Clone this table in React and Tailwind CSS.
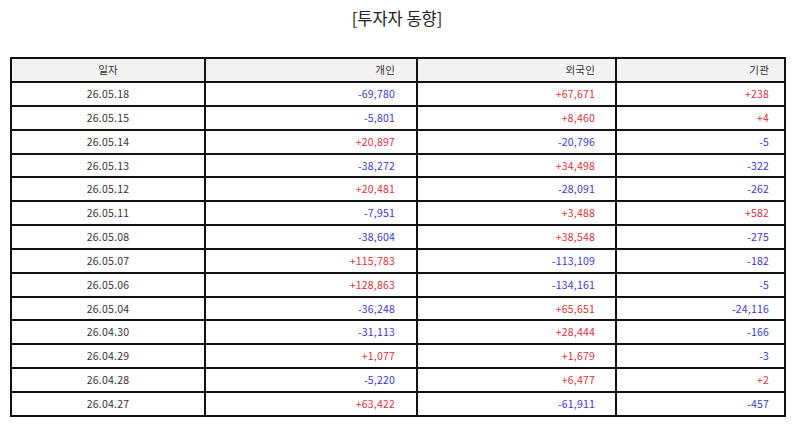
const rows = [
  ["26.05.18", "-69,780", "+67,671", "+238"],
  ["26.05.15", "-5,801", "+8,460", "+4"],
  ["26.05.14", "+20,897", "-20,796", "-5"],
  ["26.05.13", "-38,272", "+34,498", "-322"],
  ["26.05.12", "+20,481", "-28,091", "-262"],
  ["26.05.11", "-7,951", "+3,488", "+582"],
  ["26.05.08", "-38,604", "+38,548", "-275"],
  ["26.05.07", "+115,783", "-113,109", "-182"],
  ["26.05.06", "+128,863", "-134,161", "-5"],
  ["26.05.04", "-36,248", "+65,651", "-24,116"],
  ["26.04.30", "-31,113", "+28,444", "-166"],
  ["26.04.29", "+1,077", "+1,679", "-3"],
  ["26.04.28", "-5,220", "+6,477", "+2"],
  ["26.04.27", "+63,422", "-61,911", "-457"],
];

const tone = (v) => (v.startsWith("+") ? "text-[#e0303a]" : "text-[#3a3acb]");

export default function App() {
  return (
    <div className="w-[794px] h-[425px] bg-white font-['Noto_Sans_CJK_KR','Noto_Sans',sans-serif] text-[#333]">
      <h1 className="pt-[5px] h-[57px] text-center text-[16.5px] leading-[26px] text-[#222]">[투자자 동향]</h1>
      <table className="ml-[10px] w-[774px] border-collapse table-fixed text-[10.5px] tracking-[0.2px]">
        <colgroup>
          <col className="w-[194px]" />
          <col className="w-[212px]" />
          <col className="w-[199px]" />
          <col className="w-[169px]" />
        </colgroup>
        <thead>
          <tr className="h-[24px] bg-[#f2f2f2]">
            <th className="border-2 border-[#111] font-normal text-center">일자</th>
            <th className="border-2 border-[#111] font-normal text-right pr-[21px]">개인</th>
            <th className="border-2 border-[#111] font-normal text-right pr-[20px]">외국인</th>
            <th className="border-2 border-[#111] font-normal text-right pr-[15px]">기관</th>
          </tr>
        </thead>
        <tbody>
          {rows.map((r) => (
            <tr key={r[0]} className="h-[23.85px]">
              <td className="border-2 border-[#111] text-center p-0">{r[0]}</td>
              <td className={`border-2 border-[#111] text-right p-0 pr-[21px] ${tone(r[1])}`}>{r[1]}</td>
              <td className={`border-2 border-[#111] text-right p-0 pr-[20px] ${tone(r[2])}`}>{r[2]}</td>
              <td className={`border-2 border-[#111] text-right p-0 pr-[15px] ${tone(r[3])}`}>{r[3]}</td>
            </tr>
          ))}
        </tbody>
      </table>
    </div>
  );
}
